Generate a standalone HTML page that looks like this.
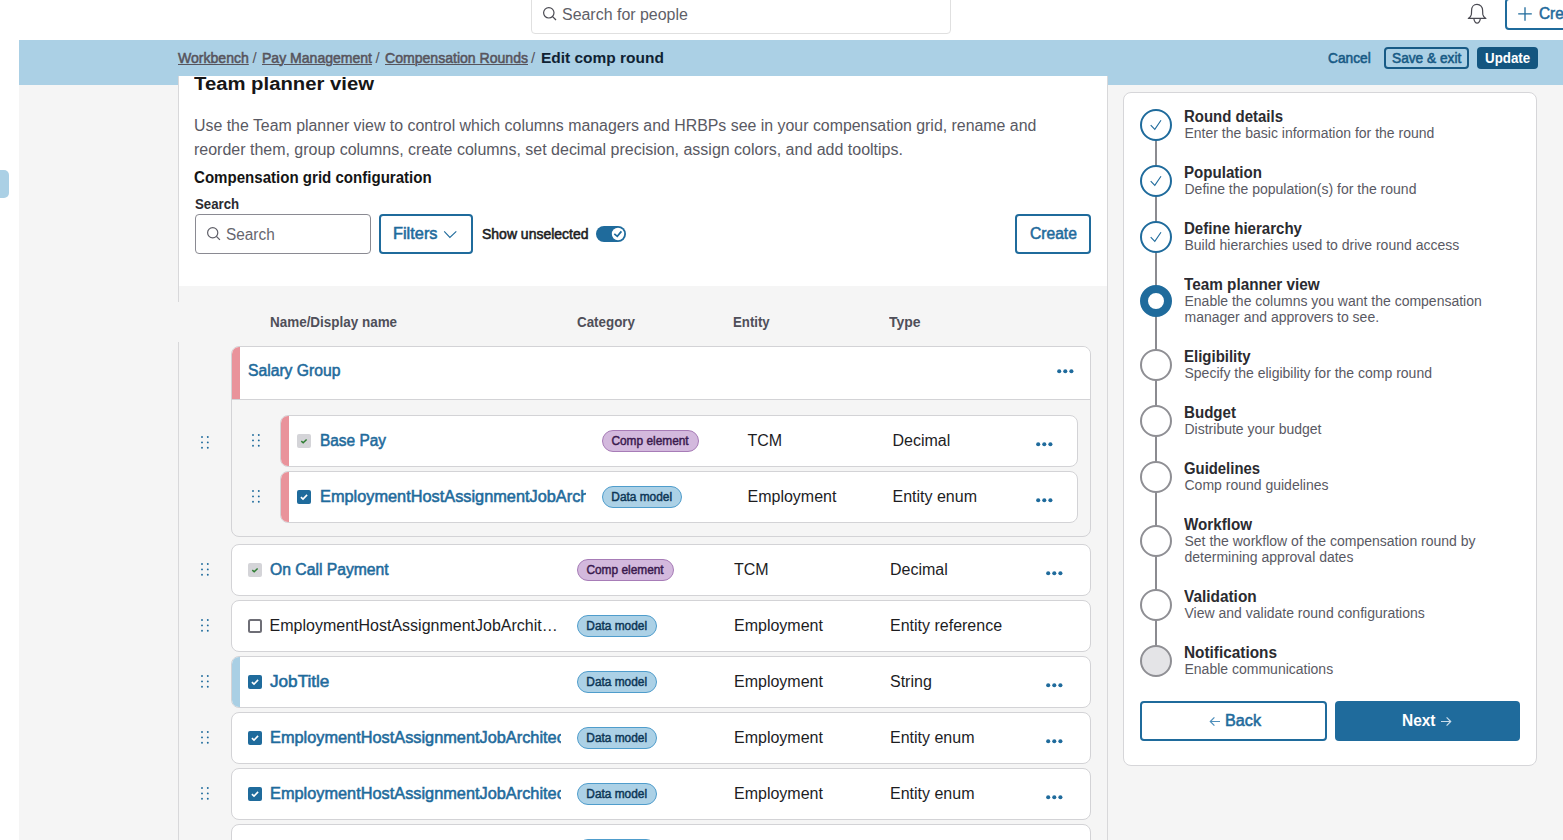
<!DOCTYPE html>
<html><head><meta charset="utf-8"><title>Edit comp round</title>
<style>
html,body{margin:0;padding:0}
body{width:1563px;height:840px;overflow:hidden;position:relative;background:#fff;font-family:"Liberation Sans",sans-serif}
.t{position:absolute;line-height:1;white-space:nowrap;transform-origin:0 0}
.r{position:absolute}
.bc u{text-decoration:underline;text-decoration-thickness:1px;text-underline-offset:1px}
.pill{position:absolute;height:22px;box-sizing:border-box;border:1px solid;border-radius:11px;font-size:12px;font-weight:400;line-height:20px;text-align:center;white-space:nowrap;-webkit-text-stroke:0.45px currentColor}
.pill span{display:inline-block;transform:scaleX(0.99)}
</style></head><body>
<div class="r" style="left:19px;top:40px;width:1544px;height:800px;background:#f5f5f5"></div>
<div class="r" style="left:19px;top:40px;width:1544px;height:45px;background:#abd0e5"></div>
<div class="r" style="left:0px;top:170px;width:9px;height:28px;background:#abd0e5;border-radius:0 5px 5px 0"></div>
<div class="r" style="left:531px;top:-8px;width:420px;height:42px;border:1px solid #e0e0e0;border-radius:4px;box-sizing:border-box;background:#fff"></div>
<svg class="r" style="left:542px;top:6px" width="16" height="16" viewBox="0 0 16 16"><circle cx="6.8" cy="6.8" r="5.2" fill="none" stroke="#4a4a52" stroke-width="1.2"/><line x1="10.6" y1="10.6" x2="14" y2="14" stroke="#4a4a52" stroke-width="1.3"/></svg>
<div class="t " id="t1" style="left:562px;top:6.76px;font-size:16px;font-weight:400;color:#5f5f68;transform:scaleX(0.9967);">Search for people</div>
<svg class="r" style="left:1467px;top:3px" width="21" height="22" viewBox="0 0 21 22"><path d="M10 1.4C6.6 1.4 4.6 4 4.6 7.2L4.4 11.4C4.2 13 3 14.4 1.3 15.4H18.9C17.2 14.4 16 13 15.8 11.4L15.6 7.2C15.6 4 13.4 1.4 10 1.4Z" fill="none" stroke="#4a4a52" stroke-width="1.2" stroke-linejoin="round"/><path d="M6.9 15.9C7.4 18.6 8.6 20.2 10.1 20.2C11.6 20.2 12.8 18.6 13.3 15.9" fill="none" stroke="#4a4a52" stroke-width="1.2"/></svg>
<div class="r" style="left:1505px;top:-2px;width:120px;height:32px;border:2px solid #1f6b9c;border-radius:4px;box-sizing:border-box;background:#fff"></div>
<svg class="r" style="left:1518px;top:7px" width="14" height="14" viewBox="0 0 14 14"><path d="M7 0.2v13.6M0.2 6.8h13.6" stroke="#1f6b9c" stroke-width="1.3"/></svg>
<div class="t " id="t2" style="left:1538.8px;top:5.76px;font-size:16px;font-weight:400;-webkit-text-stroke:0.55px #1f6b9c;color:#1f6b9c;transform:scaleX(0.9600);">Create</div>
<div class="t bc" id="t3" style="left:178px;top:49.90px;font-size:15px;font-weight:400;-webkit-text-stroke:0.55px #57545c;color:#57545c;transform:scaleX(0.9366);"><u>Workbench</u></div>
<div class="t " id="t4" style="left:252.5px;top:49.90px;font-size:15px;font-weight:400;color:#57545c;">/</div>
<div class="t bc" id="t5" style="left:262px;top:49.90px;font-size:15px;font-weight:400;-webkit-text-stroke:0.55px #57545c;color:#57545c;transform:scaleX(0.9355);"><u>Pay Management</u></div>
<div class="t " id="t6" style="left:375.5px;top:49.90px;font-size:15px;font-weight:400;color:#57545c;">/</div>
<div class="t bc" id="t7" style="left:384.5px;top:49.90px;font-size:15px;font-weight:400;-webkit-text-stroke:0.55px #57545c;color:#57545c;transform:scaleX(0.9371);"><u>Compensation Rounds</u></div>
<div class="t " id="t8" style="left:531px;top:49.90px;font-size:15px;font-weight:400;color:#57545c;">/</div>
<div class="t " id="t9" style="left:540.6px;top:50.20px;font-size:15px;font-weight:700;color:#0f2233;transform:scaleX(1.0313);">Edit comp round</div>
<div class="t " id="t10" style="left:1327.5px;top:51.05px;font-size:14px;font-weight:400;-webkit-text-stroke:0.55px #175a85;color:#175a85;transform:scaleX(0.9795);">Cancel</div>
<div class="r" style="left:1384px;top:47px;width:85px;height:22px;border:2px solid #175a85;border-radius:4px;box-sizing:border-box"></div>
<div class="t " id="t11" style="left:1392px;top:51.05px;font-size:14px;font-weight:400;-webkit-text-stroke:0.55px #175a85;color:#175a85;transform:scaleX(0.9784);">Save &amp; exit</div>
<div class="r" style="left:1477px;top:47px;width:61px;height:22px;background:#13557f;border-radius:4px"></div>
<div class="t " id="t12" style="left:1484.8px;top:51.05px;font-size:14px;font-weight:700;color:#fff;transform:scaleX(0.9525);">Update</div>
<div class="r" style="left:178px;top:76px;width:930px;height:210px;background:#fff"></div>
<div class="r" style="left:178px;top:76px;width:1px;height:226px;background:#d8d8da"></div>
<div class="r" style="left:178px;top:342px;width:1px;height:498px;background:#d8d8da"></div>
<div class="r" style="left:1107px;top:76px;width:1px;height:764px;background:#d8d8da"></div>
<div class="t " id="t13" style="left:194px;top:74.56px;font-size:18px;font-weight:700;color:#161616;transform:scaleX(1.1269);">Team planner view</div>
<div class="t " id="t14" style="left:194px;top:118.36px;font-size:16px;font-weight:400;color:#595963;transform:scaleX(0.9932);">Use the Team planner view to control which columns managers and HRBPs see in your compensation grid, rename and</div>
<div class="t " id="t15" style="left:194px;top:141.96px;font-size:16px;font-weight:400;color:#595963;transform:scaleX(0.9989);">reorder them, group columns, create columns, set decimal precision, assign colors, and add tooltips.</div>
<div class="t " id="t16" style="left:194px;top:170.46px;font-size:16px;font-weight:700;color:#141414;transform:scaleX(0.9416);">Compensation grid configuration</div>
<div class="t " id="t17" style="left:194.8px;top:197.05px;font-size:14px;font-weight:700;color:#2b2b30;transform:scaleX(0.9464);">Search</div>
<div class="r" style="left:195px;top:214px;width:176px;height:40px;border:1px solid #8a8a92;border-radius:4px;box-sizing:border-box;background:#fff"></div>
<svg class="r" style="left:206px;top:226px" width="16" height="16" viewBox="0 0 16 16"><circle cx="6.7" cy="6.7" r="5.1" fill="none" stroke="#5f5f68" stroke-width="1.2"/><line x1="10.4" y1="10.4" x2="13.9" y2="13.9" stroke="#5f5f68" stroke-width="1.3"/></svg>
<div class="t " id="t18" style="left:226px;top:227.06px;font-size:16px;font-weight:400;color:#66666e;transform:scaleX(0.9605);">Search</div>
<div class="r" style="left:379px;top:214px;width:94px;height:40px;border:2px solid #1f6b9c;border-radius:4px;box-sizing:border-box"></div>
<div class="t " id="t19" style="left:393px;top:225.56px;font-size:16px;font-weight:400;-webkit-text-stroke:0.55px #1f6b9c;color:#1f6b9c;transform:scaleX(1.0215);">Filters</div>
<svg class="r" style="left:443px;top:230px" width="15" height="9" viewBox="0 0 15 9"><path d="M1.2 1.4L6.9 7.4 13.3 1.4" fill="none" stroke="#1f6b9c" stroke-width="1.1"/></svg>
<div class="t " id="t20" style="left:482px;top:227.45px;font-size:14px;font-weight:400;-webkit-text-stroke:0.55px #1d1d1f;color:#1d1d1f;transform:scaleX(0.9987);">Show unselected</div>
<div class="r" style="left:596px;top:226px;width:30px;height:16px;background:#1f6b9c;border-radius:8px"></div>
<svg class="r" style="left:611px;top:227px" width="14" height="14" viewBox="0 0 14 14"><circle cx="7" cy="7" r="6.2" fill="#fff"/><path d="M3.3 6.8l3 2.6 4.1-5" fill="none" stroke="#1f6b9c" stroke-width="1.7"/></svg>
<div class="r" style="left:1015px;top:214px;width:76px;height:40px;border:2px solid #1f6b9c;border-radius:4px;box-sizing:border-box"></div>
<div class="t " id="t21" style="left:1030px;top:225.56px;font-size:16px;font-weight:400;-webkit-text-stroke:0.55px #1f6b9c;color:#1f6b9c;transform:scaleX(0.9764);">Create</div>
<div class="t " id="t22" style="left:270.4px;top:314.95px;font-size:14px;font-weight:700;color:#4f4f59;transform:scaleX(0.9607);">Name/Display name</div>
<div class="t " id="t23" style="left:576.5px;top:314.95px;font-size:14px;font-weight:700;color:#4f4f59;transform:scaleX(0.9557);">Category</div>
<div class="t " id="t24" style="left:733px;top:314.95px;font-size:14px;font-weight:700;color:#4f4f59;transform:scaleX(0.9437);">Entity</div>
<div class="t " id="t25" style="left:889px;top:314.95px;font-size:14px;font-weight:700;color:#4f4f59;transform:scaleX(0.9987);">Type</div>
<div class="r" style="left:231px;top:346px;width:860px;height:191px;border:1px solid #d3d3d6;border-radius:8px;box-sizing:border-box;background:#f5f5f5;overflow:hidden"><div style="position:absolute;left:0;top:0;right:0;height:52px;background:#fff;border-bottom:1px solid #d3d3d6"></div><div style="position:absolute;left:0;top:0;width:8px;height:52px;background:#e9939b"></div></div>
<div class="t " id="t26" style="left:247.6px;top:362.96px;font-size:16px;font-weight:400;-webkit-text-stroke:0.55px #1f6b9c;color:#1f6b9c;transform:scaleX(0.9802);">Salary Group</div>
<svg class="r" style="left:1057.20px;top:368.80px" width="17" height="5" viewBox="0 0 17 5"><circle cx="2.20" cy="2.2" r="2.05" fill="#1f6b9c"/><circle cx="8.30" cy="2.2" r="2.05" fill="#1f6b9c"/><circle cx="14.40" cy="2.2" r="2.05" fill="#1f6b9c"/></svg>
<svg class="r" style="left:201.10px;top:435.50px" width="9" height="13" viewBox="0 0 9 13"><circle cx="1.0" cy="1.0" r="0.95" fill="#1f6b9c"/><circle cx="1.0" cy="6.4" r="0.95" fill="#1f6b9c"/><circle cx="1.0" cy="11.8" r="0.95" fill="#1f6b9c"/><circle cx="6.8" cy="1.0" r="0.95" fill="#1f6b9c"/><circle cx="6.8" cy="6.4" r="0.95" fill="#1f6b9c"/><circle cx="6.8" cy="11.8" r="0.95" fill="#1f6b9c"/></svg>
<div class="r" style="left:280px;top:415px;width:798px;height:52px;border:1px solid #d3d3d6;border-radius:8px;box-sizing:border-box;background:#fff;overflow:hidden"><div style="position:absolute;left:0;top:0;bottom:0;width:8px;background:#e9939b"></div></div>
<svg class="r" style="left:252.10px;top:433.60px" width="9" height="13" viewBox="0 0 9 13"><circle cx="1.0" cy="1.0" r="0.95" fill="#1f6b9c"/><circle cx="1.0" cy="6.4" r="0.95" fill="#1f6b9c"/><circle cx="1.0" cy="11.8" r="0.95" fill="#1f6b9c"/><circle cx="6.8" cy="1.0" r="0.95" fill="#1f6b9c"/><circle cx="6.8" cy="6.4" r="0.95" fill="#1f6b9c"/><circle cx="6.8" cy="11.8" r="0.95" fill="#1f6b9c"/></svg>
<svg class="r" style="left:297px;top:434px" width="14" height="14" viewBox="0 0 14 14"><rect x="0" y="0" width="14" height="14" rx="2" fill="#d4d4d8"/><path d="M4.3 7.1l1.9 1.7 3.4-3.3" fill="none" stroke="#2e7d32" stroke-width="1.5"/></svg>
<div class="t " id="t27" style="left:319.5px;top:432.96px;font-size:16px;font-weight:400;-webkit-text-stroke:0.55px #1f6b9c;color:#1f6b9c;transform:scaleX(0.9637);">Base Pay</div>
<div class="pill" style="left:602px;top:430px;width:97px;background:#d3b9dd;border-color:#a77cb7;color:#3a1a4e"><span>Comp element</span></div>
<div class="t " id="t28" style="left:747.5px;top:432.96px;font-size:16px;font-weight:400;color:#1d1d1f;">TCM</div>
<div class="t " id="t29" style="left:892.5px;top:432.96px;font-size:16px;font-weight:400;color:#1d1d1f;">Decimal</div>
<svg class="r" style="left:1036.40px;top:441.80px" width="17" height="5" viewBox="0 0 17 5"><circle cx="2.20" cy="2.2" r="2.05" fill="#1f6b9c"/><circle cx="8.30" cy="2.2" r="2.05" fill="#1f6b9c"/><circle cx="14.40" cy="2.2" r="2.05" fill="#1f6b9c"/></svg>
<div class="r" style="left:280px;top:471px;width:798px;height:52px;border:1px solid #d3d3d6;border-radius:8px;box-sizing:border-box;background:#fff;overflow:hidden"><div style="position:absolute;left:0;top:0;bottom:0;width:8px;background:#e9939b"></div></div>
<svg class="r" style="left:252.10px;top:489.60px" width="9" height="13" viewBox="0 0 9 13"><circle cx="1.0" cy="1.0" r="0.95" fill="#1f6b9c"/><circle cx="1.0" cy="6.4" r="0.95" fill="#1f6b9c"/><circle cx="1.0" cy="11.8" r="0.95" fill="#1f6b9c"/><circle cx="6.8" cy="1.0" r="0.95" fill="#1f6b9c"/><circle cx="6.8" cy="6.4" r="0.95" fill="#1f6b9c"/><circle cx="6.8" cy="11.8" r="0.95" fill="#1f6b9c"/></svg>
<svg class="r" style="left:297px;top:490px" width="14" height="14" viewBox="0 0 14 14"><rect x="0" y="0" width="14" height="14" rx="2" fill="#1f6b9c"/><path d="M3.9 7.1l2.1 2 4.1-4.2" fill="none" stroke="#fff" stroke-width="1.6"/></svg>
<div class="r" style="left:0;top:0;width:586px;height:840px;overflow:hidden"><div class="t " id="t30" style="left:319.5px;top:488.96px;font-size:16px;font-weight:400;-webkit-text-stroke:0.55px #1f6b9c;color:#1f6b9c;transform:scaleX(1.0200);">EmploymentHostAssignmentJobArchitecture</div></div>
<div class="pill" style="left:602px;top:486px;width:80px;background:#acd1e6;border-color:#4f9dcc;color:#0c3656"><span>Data model</span></div>
<div class="t " id="t31" style="left:747.5px;top:488.96px;font-size:16px;font-weight:400;color:#1d1d1f;">Employment</div>
<div class="t " id="t32" style="left:892.5px;top:488.96px;font-size:16px;font-weight:400;color:#1d1d1f;">Entity enum</div>
<svg class="r" style="left:1036.40px;top:497.80px" width="17" height="5" viewBox="0 0 17 5"><circle cx="2.20" cy="2.2" r="2.05" fill="#1f6b9c"/><circle cx="8.30" cy="2.2" r="2.05" fill="#1f6b9c"/><circle cx="14.40" cy="2.2" r="2.05" fill="#1f6b9c"/></svg>
<div class="r" style="left:231px;top:544px;width:860px;height:52px;border:1px solid #d3d3d6;border-radius:8px;box-sizing:border-box;background:#fff;overflow:hidden"></div>
<svg class="r" style="left:201.10px;top:562.50px" width="9" height="13" viewBox="0 0 9 13"><circle cx="1.0" cy="1.0" r="0.95" fill="#1f6b9c"/><circle cx="1.0" cy="6.4" r="0.95" fill="#1f6b9c"/><circle cx="1.0" cy="11.8" r="0.95" fill="#1f6b9c"/><circle cx="6.8" cy="1.0" r="0.95" fill="#1f6b9c"/><circle cx="6.8" cy="6.4" r="0.95" fill="#1f6b9c"/><circle cx="6.8" cy="11.8" r="0.95" fill="#1f6b9c"/></svg>
<svg class="r" style="left:248px;top:563px" width="14" height="14" viewBox="0 0 14 14"><rect x="0" y="0" width="14" height="14" rx="2" fill="#d4d4d8"/><path d="M4.3 7.1l1.9 1.7 3.4-3.3" fill="none" stroke="#2e7d32" stroke-width="1.5"/></svg>
<div class="t " id="t33" style="left:269.6px;top:561.96px;font-size:16px;font-weight:400;-webkit-text-stroke:0.55px #1f6b9c;color:#1f6b9c;transform:scaleX(0.9815);">On Call Payment</div>
<div class="pill" style="left:577px;top:559px;width:97px;background:#d3b9dd;border-color:#a77cb7;color:#3a1a4e"><span>Comp element</span></div>
<div class="t " id="t34" style="left:734px;top:561.96px;font-size:16px;font-weight:400;color:#1d1d1f;">TCM</div>
<div class="t " id="t35" style="left:890px;top:561.96px;font-size:16px;font-weight:400;color:#1d1d1f;">Decimal</div>
<svg class="r" style="left:1045.70px;top:570.70px" width="17" height="5" viewBox="0 0 17 5"><circle cx="2.20" cy="2.2" r="2.05" fill="#1f6b9c"/><circle cx="8.30" cy="2.2" r="2.05" fill="#1f6b9c"/><circle cx="14.40" cy="2.2" r="2.05" fill="#1f6b9c"/></svg>
<div class="r" style="left:231px;top:600px;width:860px;height:52px;border:1px solid #d3d3d6;border-radius:8px;box-sizing:border-box;background:#fff;overflow:hidden"></div>
<svg class="r" style="left:201.10px;top:618.50px" width="9" height="13" viewBox="0 0 9 13"><circle cx="1.0" cy="1.0" r="0.95" fill="#1f6b9c"/><circle cx="1.0" cy="6.4" r="0.95" fill="#1f6b9c"/><circle cx="1.0" cy="11.8" r="0.95" fill="#1f6b9c"/><circle cx="6.8" cy="1.0" r="0.95" fill="#1f6b9c"/><circle cx="6.8" cy="6.4" r="0.95" fill="#1f6b9c"/><circle cx="6.8" cy="11.8" r="0.95" fill="#1f6b9c"/></svg>
<svg class="r" style="left:248px;top:619px" width="14" height="14" viewBox="0 0 14 14"><rect x="1" y="1" width="12" height="12" rx="1.5" fill="#fff" stroke="#6e6e76" stroke-width="2"/></svg>
<div class="t " id="t36" style="left:269.6px;top:617.96px;font-size:16px;font-weight:400;color:#1d1d1f;">EmploymentHostAssignmentJobArchit…</div>
<div class="pill" style="left:577px;top:615px;width:80px;background:#acd1e6;border-color:#4f9dcc;color:#0c3656"><span>Data model</span></div>
<div class="t " id="t37" style="left:734px;top:617.96px;font-size:16px;font-weight:400;color:#1d1d1f;">Employment</div>
<div class="t " id="t38" style="left:890px;top:617.96px;font-size:16px;font-weight:400;color:#1d1d1f;">Entity reference</div>
<div class="r" style="left:231px;top:656px;width:860px;height:52px;border:1px solid #d3d3d6;border-radius:8px;box-sizing:border-box;background:#fff;overflow:hidden"><div style="position:absolute;left:0;top:0;bottom:0;width:8px;background:#a9cfe4"></div></div>
<svg class="r" style="left:201.10px;top:674.50px" width="9" height="13" viewBox="0 0 9 13"><circle cx="1.0" cy="1.0" r="0.95" fill="#1f6b9c"/><circle cx="1.0" cy="6.4" r="0.95" fill="#1f6b9c"/><circle cx="1.0" cy="11.8" r="0.95" fill="#1f6b9c"/><circle cx="6.8" cy="1.0" r="0.95" fill="#1f6b9c"/><circle cx="6.8" cy="6.4" r="0.95" fill="#1f6b9c"/><circle cx="6.8" cy="11.8" r="0.95" fill="#1f6b9c"/></svg>
<svg class="r" style="left:248px;top:675px" width="14" height="14" viewBox="0 0 14 14"><rect x="0" y="0" width="14" height="14" rx="2" fill="#1f6b9c"/><path d="M3.9 7.1l2.1 2 4.1-4.2" fill="none" stroke="#fff" stroke-width="1.6"/></svg>
<div class="t " id="t39" style="left:269.6px;top:673.96px;font-size:16px;font-weight:400;-webkit-text-stroke:0.55px #1f6b9c;color:#1f6b9c;transform:scaleX(1.0715);">JobTitle</div>
<div class="pill" style="left:577px;top:671px;width:80px;background:#acd1e6;border-color:#4f9dcc;color:#0c3656"><span>Data model</span></div>
<div class="t " id="t40" style="left:734px;top:673.96px;font-size:16px;font-weight:400;color:#1d1d1f;">Employment</div>
<div class="t " id="t41" style="left:890px;top:673.96px;font-size:16px;font-weight:400;color:#1d1d1f;">String</div>
<svg class="r" style="left:1045.70px;top:682.70px" width="17" height="5" viewBox="0 0 17 5"><circle cx="2.20" cy="2.2" r="2.05" fill="#1f6b9c"/><circle cx="8.30" cy="2.2" r="2.05" fill="#1f6b9c"/><circle cx="14.40" cy="2.2" r="2.05" fill="#1f6b9c"/></svg>
<div class="r" style="left:231px;top:712px;width:860px;height:52px;border:1px solid #d3d3d6;border-radius:8px;box-sizing:border-box;background:#fff;overflow:hidden"></div>
<svg class="r" style="left:201.10px;top:730.50px" width="9" height="13" viewBox="0 0 9 13"><circle cx="1.0" cy="1.0" r="0.95" fill="#1f6b9c"/><circle cx="1.0" cy="6.4" r="0.95" fill="#1f6b9c"/><circle cx="1.0" cy="11.8" r="0.95" fill="#1f6b9c"/><circle cx="6.8" cy="1.0" r="0.95" fill="#1f6b9c"/><circle cx="6.8" cy="6.4" r="0.95" fill="#1f6b9c"/><circle cx="6.8" cy="11.8" r="0.95" fill="#1f6b9c"/></svg>
<svg class="r" style="left:248px;top:731px" width="14" height="14" viewBox="0 0 14 14"><rect x="0" y="0" width="14" height="14" rx="2" fill="#1f6b9c"/><path d="M3.9 7.1l2.1 2 4.1-4.2" fill="none" stroke="#fff" stroke-width="1.6"/></svg>
<div class="r" style="left:0;top:0;width:561px;height:840px;overflow:hidden"><div class="t " id="t42" style="left:269.6px;top:729.96px;font-size:16px;font-weight:400;-webkit-text-stroke:0.55px #1f6b9c;color:#1f6b9c;transform:scaleX(1.0200);">EmploymentHostAssignmentJobArchitecture</div></div>
<div class="pill" style="left:577px;top:727px;width:80px;background:#acd1e6;border-color:#4f9dcc;color:#0c3656"><span>Data model</span></div>
<div class="t " id="t43" style="left:734px;top:729.96px;font-size:16px;font-weight:400;color:#1d1d1f;">Employment</div>
<div class="t " id="t44" style="left:890px;top:729.96px;font-size:16px;font-weight:400;color:#1d1d1f;">Entity enum</div>
<svg class="r" style="left:1045.70px;top:738.70px" width="17" height="5" viewBox="0 0 17 5"><circle cx="2.20" cy="2.2" r="2.05" fill="#1f6b9c"/><circle cx="8.30" cy="2.2" r="2.05" fill="#1f6b9c"/><circle cx="14.40" cy="2.2" r="2.05" fill="#1f6b9c"/></svg>
<div class="r" style="left:231px;top:768px;width:860px;height:52px;border:1px solid #d3d3d6;border-radius:8px;box-sizing:border-box;background:#fff;overflow:hidden"></div>
<svg class="r" style="left:201.10px;top:786.50px" width="9" height="13" viewBox="0 0 9 13"><circle cx="1.0" cy="1.0" r="0.95" fill="#1f6b9c"/><circle cx="1.0" cy="6.4" r="0.95" fill="#1f6b9c"/><circle cx="1.0" cy="11.8" r="0.95" fill="#1f6b9c"/><circle cx="6.8" cy="1.0" r="0.95" fill="#1f6b9c"/><circle cx="6.8" cy="6.4" r="0.95" fill="#1f6b9c"/><circle cx="6.8" cy="11.8" r="0.95" fill="#1f6b9c"/></svg>
<svg class="r" style="left:248px;top:787px" width="14" height="14" viewBox="0 0 14 14"><rect x="0" y="0" width="14" height="14" rx="2" fill="#1f6b9c"/><path d="M3.9 7.1l2.1 2 4.1-4.2" fill="none" stroke="#fff" stroke-width="1.6"/></svg>
<div class="r" style="left:0;top:0;width:561px;height:840px;overflow:hidden"><div class="t " id="t45" style="left:269.6px;top:785.96px;font-size:16px;font-weight:400;-webkit-text-stroke:0.55px #1f6b9c;color:#1f6b9c;transform:scaleX(1.0200);">EmploymentHostAssignmentJobArchitecture</div></div>
<div class="pill" style="left:577px;top:783px;width:80px;background:#acd1e6;border-color:#4f9dcc;color:#0c3656"><span>Data model</span></div>
<div class="t " id="t46" style="left:734px;top:785.96px;font-size:16px;font-weight:400;color:#1d1d1f;">Employment</div>
<div class="t " id="t47" style="left:890px;top:785.96px;font-size:16px;font-weight:400;color:#1d1d1f;">Entity enum</div>
<svg class="r" style="left:1045.70px;top:794.70px" width="17" height="5" viewBox="0 0 17 5"><circle cx="2.20" cy="2.2" r="2.05" fill="#1f6b9c"/><circle cx="8.30" cy="2.2" r="2.05" fill="#1f6b9c"/><circle cx="14.40" cy="2.2" r="2.05" fill="#1f6b9c"/></svg>
<div class="r" style="left:231px;top:824px;width:860px;height:52px;border:1px solid #d3d3d6;border-radius:8px;box-sizing:border-box;background:#fff;overflow:hidden"></div>
<svg class="r" style="left:201.10px;top:842.50px" width="9" height="13" viewBox="0 0 9 13"><circle cx="1.0" cy="1.0" r="0.95" fill="#1f6b9c"/><circle cx="1.0" cy="6.4" r="0.95" fill="#1f6b9c"/><circle cx="1.0" cy="11.8" r="0.95" fill="#1f6b9c"/><circle cx="6.8" cy="1.0" r="0.95" fill="#1f6b9c"/><circle cx="6.8" cy="6.4" r="0.95" fill="#1f6b9c"/><circle cx="6.8" cy="11.8" r="0.95" fill="#1f6b9c"/></svg>
<svg class="r" style="left:248px;top:843px" width="14" height="14" viewBox="0 0 14 14"><rect x="0" y="0" width="14" height="14" rx="2" fill="#1f6b9c"/><path d="M3.9 7.1l2.1 2 4.1-4.2" fill="none" stroke="#fff" stroke-width="1.6"/></svg>
<div class="r" style="left:0;top:0;width:561px;height:840px;overflow:hidden"><div class="t " id="t48" style="left:269.6px;top:841.96px;font-size:16px;font-weight:400;-webkit-text-stroke:0.55px #1f6b9c;color:#1f6b9c;transform:scaleX(1.0200);">EmploymentHostAssignmentJobArchitecture</div></div>
<div class="pill" style="left:577px;top:839px;width:80px;background:#acd1e6;border-color:#4f9dcc;color:#0c3656"><span>Data model</span></div>
<div class="t " id="t49" style="left:734px;top:841.96px;font-size:16px;font-weight:400;color:#1d1d1f;">Employment</div>
<div class="t " id="t50" style="left:890px;top:841.96px;font-size:16px;font-weight:400;color:#1d1d1f;">Entity enum</div>
<svg class="r" style="left:1045.70px;top:850.70px" width="17" height="5" viewBox="0 0 17 5"><circle cx="2.20" cy="2.2" r="2.05" fill="#1f6b9c"/><circle cx="8.30" cy="2.2" r="2.05" fill="#1f6b9c"/><circle cx="14.40" cy="2.2" r="2.05" fill="#1f6b9c"/></svg>
<div class="r" style="left:1123px;top:92px;width:414px;height:674px;background:#fff;border:1px solid #d6d6d9;border-radius:8px;box-sizing:border-box"></div>
<div class="r" style="left:1155px;top:125px;width:2px;height:536px;background:#8b8b90"></div>
<svg class="r" style="left:1140px;top:109px" width="32" height="32" viewBox="0 0 32 32"><circle cx="16" cy="16" r="15" fill="#fff" stroke="#1f6b9c" stroke-width="2"/><path d="M10.7 16.2L14.8 20.4 21 11.2" fill="none" stroke="#1f6b9c" stroke-width="1.1"/></svg>
<div class="t " id="t51" style="left:1184.2px;top:108.96px;font-size:16px;font-weight:700;color:#2b2b30;transform:scaleX(0.9359);">Round details</div>
<div class="t " id="t52" style="left:1184.5px;top:126.15px;font-size:14px;font-weight:400;color:#595963;">Enter the basic information for the round</div>
<svg class="r" style="left:1140px;top:165px" width="32" height="32" viewBox="0 0 32 32"><circle cx="16" cy="16" r="15" fill="#fff" stroke="#1f6b9c" stroke-width="2"/><path d="M10.7 16.2L14.8 20.4 21 11.2" fill="none" stroke="#1f6b9c" stroke-width="1.1"/></svg>
<div class="t " id="t53" style="left:1184.2px;top:164.96px;font-size:16px;font-weight:700;color:#2b2b30;transform:scaleX(0.9437);">Population</div>
<div class="t " id="t54" style="left:1184.5px;top:182.15px;font-size:14px;font-weight:400;color:#595963;">Define the population(s) for the round</div>
<svg class="r" style="left:1140px;top:221px" width="32" height="32" viewBox="0 0 32 32"><circle cx="16" cy="16" r="15" fill="#fff" stroke="#1f6b9c" stroke-width="2"/><path d="M10.7 16.2L14.8 20.4 21 11.2" fill="none" stroke="#1f6b9c" stroke-width="1.1"/></svg>
<div class="t " id="t55" style="left:1184.2px;top:220.96px;font-size:16px;font-weight:700;color:#2b2b30;transform:scaleX(0.9411);">Define hierarchy</div>
<div class="t " id="t56" style="left:1184.5px;top:238.15px;font-size:14px;font-weight:400;color:#595963;">Build hierarchies used to drive round access</div>
<svg class="r" style="left:1140px;top:285px" width="32" height="32" viewBox="0 0 32 32"><circle cx="16" cy="16" r="12" fill="#fff" stroke="#1f6b9c" stroke-width="8"/></svg>
<div class="t " id="t57" style="left:1184.2px;top:277.46px;font-size:16px;font-weight:700;color:#2b2b30;transform:scaleX(0.9557);">Team planner view</div>
<div class="t " id="t58" style="left:1184.5px;top:294.15px;font-size:14px;font-weight:400;color:#595963;">Enable the columns you want the compensation</div>
<div class="t " id="t59" style="left:1184.5px;top:310.15px;font-size:14px;font-weight:400;color:#595963;">manager and approvers to see.</div>
<svg class="r" style="left:1140px;top:349px" width="32" height="32" viewBox="0 0 32 32"><circle cx="16" cy="16" r="15" fill="#fff" stroke="#8f8f94" stroke-width="2"/></svg>
<div class="t " id="t60" style="left:1184.2px;top:348.96px;font-size:16px;font-weight:700;color:#2b2b30;transform:scaleX(0.9364);">Eligibility</div>
<div class="t " id="t61" style="left:1184.5px;top:366.15px;font-size:14px;font-weight:400;color:#595963;">Specify the eligibility for the comp round</div>
<svg class="r" style="left:1140px;top:405px" width="32" height="32" viewBox="0 0 32 32"><circle cx="16" cy="16" r="15" fill="#fff" stroke="#8f8f94" stroke-width="2"/></svg>
<div class="t " id="t62" style="left:1184.2px;top:404.96px;font-size:16px;font-weight:700;color:#2b2b30;transform:scaleX(0.9436);">Budget</div>
<div class="t " id="t63" style="left:1184.5px;top:422.15px;font-size:14px;font-weight:400;color:#595963;">Distribute your budget</div>
<svg class="r" style="left:1140px;top:461px" width="32" height="32" viewBox="0 0 32 32"><circle cx="16" cy="16" r="15" fill="#fff" stroke="#8f8f94" stroke-width="2"/></svg>
<div class="t " id="t64" style="left:1184.2px;top:460.96px;font-size:16px;font-weight:700;color:#2b2b30;transform:scaleX(0.9291);">Guidelines</div>
<div class="t " id="t65" style="left:1184.5px;top:478.15px;font-size:14px;font-weight:400;color:#595963;">Comp round guidelines</div>
<svg class="r" style="left:1140px;top:525px" width="32" height="32" viewBox="0 0 32 32"><circle cx="16" cy="16" r="15" fill="#fff" stroke="#8f8f94" stroke-width="2"/></svg>
<div class="t " id="t66" style="left:1184.2px;top:517.46px;font-size:16px;font-weight:700;color:#2b2b30;transform:scaleX(0.9484);">Workflow</div>
<div class="t " id="t67" style="left:1184.5px;top:534.15px;font-size:14px;font-weight:400;color:#595963;">Set the workflow of the compensation round by</div>
<div class="t " id="t68" style="left:1184.5px;top:550.15px;font-size:14px;font-weight:400;color:#595963;">determining approval dates</div>
<svg class="r" style="left:1140px;top:589px" width="32" height="32" viewBox="0 0 32 32"><circle cx="16" cy="16" r="15" fill="#fff" stroke="#8f8f94" stroke-width="2"/></svg>
<div class="t " id="t69" style="left:1184.2px;top:588.96px;font-size:16px;font-weight:700;color:#2b2b30;transform:scaleX(0.9619);">Validation</div>
<div class="t " id="t70" style="left:1184.5px;top:606.15px;font-size:14px;font-weight:400;color:#595963;">View and validate round configurations</div>
<svg class="r" style="left:1140px;top:645px" width="32" height="32" viewBox="0 0 32 32"><circle cx="16" cy="16" r="15" fill="#e4e4e7" stroke="#8f8f94" stroke-width="2"/></svg>
<div class="t " id="t71" style="left:1184.2px;top:644.96px;font-size:16px;font-weight:700;color:#2b2b30;transform:scaleX(0.9598);">Notifications</div>
<div class="t " id="t72" style="left:1184.5px;top:662.15px;font-size:14px;font-weight:400;color:#595963;">Enable communications</div>
<div class="r" style="left:1140px;top:701px;width:187px;height:40px;border:2px solid #1f6b9c;border-radius:4px;box-sizing:border-box"></div>
<div class="t " id="t73" style="left:1225px;top:712.76px;font-size:16px;font-weight:400;-webkit-text-stroke:0.55px #1f6b9c;color:#1f6b9c;transform:scaleX(1.0119);">Back</div>
<svg class="r" style="left:1208.5px;top:715.5px" width="12" height="11" viewBox="0 0 12 11"><path d="M11 5.5H1.4M5.4 1.4L1.3 5.5 5.4 9.6" fill="none" stroke="#4f8fbb" stroke-width="1.2"/></svg>
<div class="r" style="left:1335px;top:701px;width:185px;height:40px;background:#1f6b9c;border-radius:4px"></div>
<div class="t " id="t74" style="left:1402.4px;top:712.76px;font-size:16px;font-weight:700;color:#fff;transform:scaleX(0.9658);">Next</div>
<svg class="r" style="left:1440px;top:715.5px" width="12" height="11" viewBox="0 0 12 11"><path d="M1 5.5h9.6M6.6 1.4l4.1 4.1-4.1 4.1" fill="none" stroke="#c9dcea" stroke-width="1.2"/></svg>
</body></html>
